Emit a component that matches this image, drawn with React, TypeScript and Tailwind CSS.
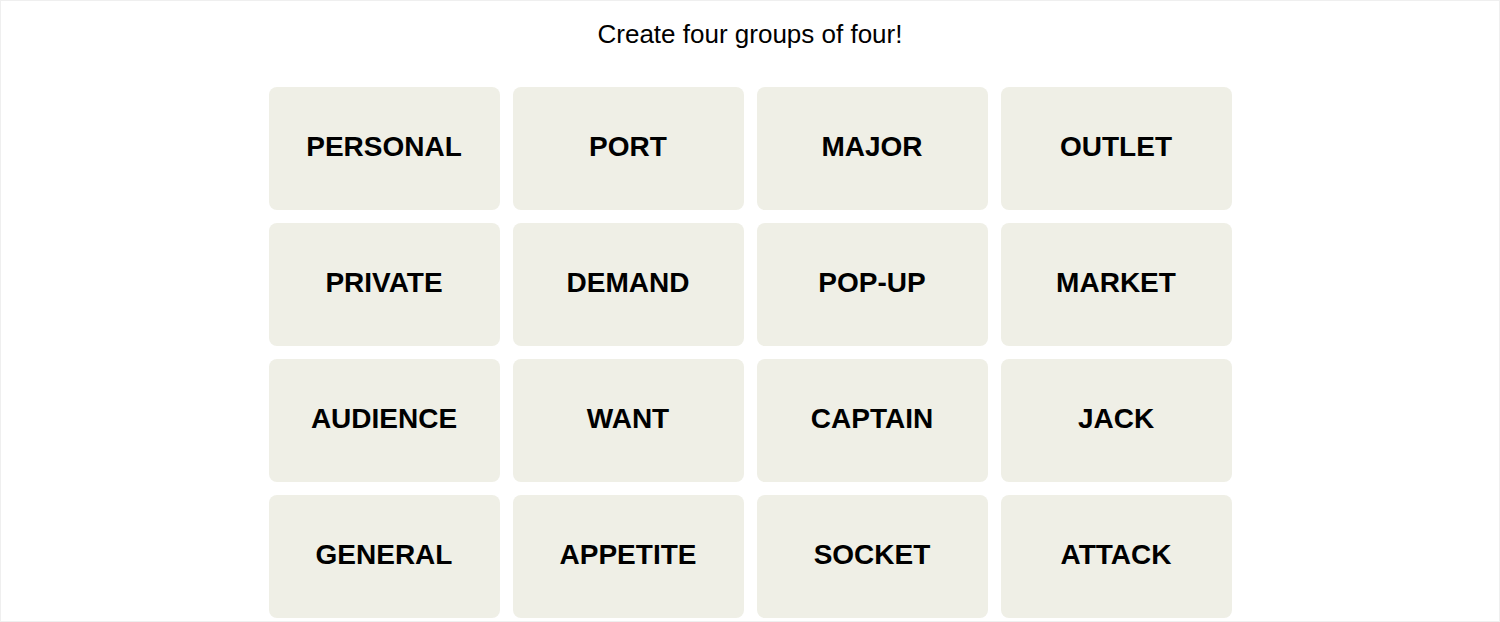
import React from 'react';

const words = [
  'PERSONAL', 'PORT', 'MAJOR', 'OUTLET',
  'PRIVATE', 'DEMAND', 'POP-UP', 'MARKET',
  'AUDIENCE', 'WANT', 'CAPTAIN', 'JACK',
  'GENERAL', 'APPETITE', 'SOCKET', 'ATTACK',
];

export default function App() {
  return (
    <div
      className="h-[622px] w-[1500px] border border-[#efefef] bg-white overflow-hidden"
      style={{ fontFamily: '"Liberation Sans", Arial, sans-serif' }}
    >
      <div className="flex flex-col items-center pt-[17px]">
        <h2 className="text-[26px] leading-[32px] text-black font-normal">Create four groups of four!</h2>

        <div className="mt-[37px] grid grid-cols-[repeat(4,231px)] gap-x-[13px] gap-y-[13px]">
          {words.map((w) => (
            <button
              key={w}
              type="button"
              className="h-[123px] rounded-lg bg-[#efefe6] flex items-center justify-center pb-[3px] text-[28px] leading-none font-bold text-black uppercase"
            >
              {w}
            </button>
          ))}
        </div>
      </div>
    </div>
  );
}
